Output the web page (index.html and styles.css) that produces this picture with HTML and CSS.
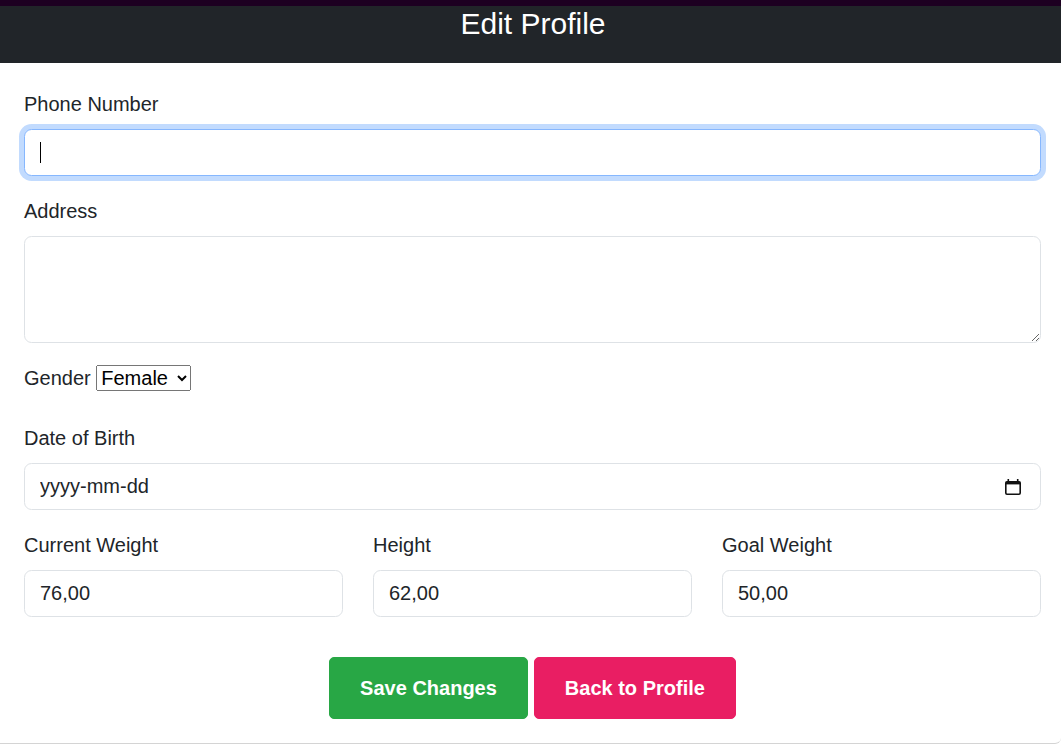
FILE: index.html
```html
<!DOCTYPE html>
<html lang="en">
<head>
<meta charset="utf-8">
<title>Edit Profile</title>
<link rel="stylesheet" href="styles.css">
</head>
<body>
<div class="topstrip"></div>
<header class="header">
  <h4 class="title">Edit Profile</h4>
</header>
<main class="card">
  <form class="form">
    <div class="field">
      <label class="form-label">Phone Number</label>
      <div class="input-wrap">
        <input class="form-control focused" type="text" value="">
        <span class="caret"></span>
      </div>
    </div>
    <div class="field">
      <label class="form-label">Address</label>
      <textarea class="form-control textarea" rows="3"></textarea>
    </div>
    <div class="field">
      <label class="form-label">Gender</label>
      <select class="select">
        <option>Male</option>
        <option selected>Female</option>
      </select>
    </div>
    <div class="field">
      <label class="form-label">Date of Birth</label>
      <div class="input-wrap">
        <input class="form-control date" type="text" placeholder="yyyy-mm-dd">
        <svg class="cal-icon" width="16" height="17" viewBox="0 0 16 17" aria-hidden="true">
          <rect x="2.5" y="1" width="1.6" height="3" fill="#111"/>
          <rect x="11.9" y="1" width="1.6" height="3" fill="#111"/>
          <rect x="0.8" y="3.8" width="14.4" height="12.4" rx="1.2" fill="none" stroke="#111" stroke-width="1.6"/>
          <rect x="0.8" y="3.8" width="14.4" height="2.6" fill="#111"/>
        </svg>
      </div>
    </div>
    <div class="row">
      <div class="col">
        <label class="form-label">Current Weight</label>
        <input class="form-control" type="text" value="76,00">
      </div>
      <div class="col">
        <label class="form-label">Height</label>
        <input class="form-control" type="text" value="62,00">
      </div>
      <div class="col">
        <label class="form-label">Goal Weight</label>
        <input class="form-control" type="text" value="50,00">
      </div>
    </div>
    <div class="actions">
      <button type="button" class="btn btn-save">Save Changes</button>
      <button type="button" class="btn btn-back">Back to Profile</button>
    </div>
  </form>
</main>
</body>
</html>
```

FILE: styles.css
```css
* { box-sizing: border-box; }
html, body {
  margin: 0;
  padding: 0;
  background: #fff;
}
body {
  font-family: "Liberation Sans", Arial, sans-serif;
  font-size: 20px;
  line-height: 1.5;
  color: #212529;
}
.topstrip {
  height: 6px;
  background: #1d0021;
}
.header {
  background: #212529;
  height: 57px;
  padding-left: 5px;
  text-align: center;
}
.title {
  margin: 0;
  font-size: 30px;
  font-weight: 400;
  line-height: 36px;
  color: #fff;
}
.card {
  padding: 26px 20px 24px 24px;
  border-bottom: 1px solid #d4d4d4;
  border-bottom-right-radius: 6px;
}
.form { margin: 0; }
.field { margin-bottom: 20px; }
.form-label {
  display: inline-block;
  margin-bottom: 10px;
}
.input-wrap { position: relative; }
.form-control {
  display: block;
  width: 100%;
  height: 47px;
  padding: 7.5px 15px;
  font-family: inherit;
  font-size: 20px;
  line-height: 30px;
  color: #212529;
  background: #fff;
  border: 1px solid #dee2e6;
  border-radius: 7.5px;
  outline: none;
}
.form-control::placeholder { color: #212529; opacity: 1; }
.focused {
  border-color: #86b7fe;
  box-shadow: 0 0 0 5px rgba(13, 110, 253, 0.25);
}
.caret {
  position: absolute;
  left: 16px;
  top: 13px;
  width: 1px;
  height: 21px;
  background: #000;
}
.textarea {
  height: 107px;
  resize: vertical;
}
.select {
  font-family: inherit;
  font-size: 20px;
  color: #000;
  padding-right: 6px;
  margin-left: 0;
}
.cal-icon {
  position: absolute;
  right: 20px;
  top: 15px;
}
.row {
  display: grid;
  grid-template-columns: repeat(3, 1fr);
  column-gap: 30px;
  margin-bottom: 20px;
}
.actions {
  display: flex;
  justify-content: center;
  gap: 6px;
  padding-top: 20px;
}
.btn {
  font-family: inherit;
  font-size: 20px;
  font-weight: 700;
  line-height: 30px;
  padding: 15px 30px;
  border: 1px solid transparent;
  border-radius: 5px;
  color: #fff;
  cursor: pointer;
}
.btn-save { background: #28a745; border-color: #28a745; }
.btn-back { background: #e91e63; border-color: #e91e63; }
```
